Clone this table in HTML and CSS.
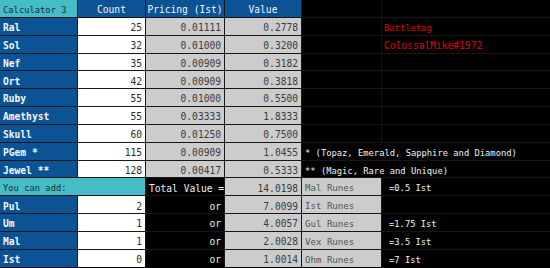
FILE: index.html
```html
<!DOCTYPE html>
<html>
<head>
<meta charset="utf-8">
<link rel="stylesheet" href="styles.css">
</head>
<body>
<div class="sheet">
  <div class="c cyan small">Calculator 3</div>
  <div class="c hdr">Count</div>
  <div class="c hdr">Pricing (Ist)</div>
  <div class="c hdr">Value</div>
  <div class="c blk"></div>
  <div class="c blk"></div>

  <div class="c lbl">Ral</div><div class="c wht">25</div><div class="c gry">0.01111</div><div class="c gry">0.2778</div><div class="c blk"></div><div class="c blk red small">Battletag</div>
  <div class="c lbl">Sol</div><div class="c wht">32</div><div class="c gry">0.01000</div><div class="c gry">0.3200</div><div class="c blk"></div><div class="c blk red">ColossalMike#1972</div>
  <div class="c lbl">Nef</div><div class="c wht">35</div><div class="c gry">0.00909</div><div class="c gry">0.3182</div><div class="c blk"></div><div class="c blk"></div>
  <div class="c lbl">Ort</div><div class="c wht">42</div><div class="c gry">0.00909</div><div class="c gry">0.3818</div><div class="c blk"></div><div class="c blk"></div>
  <div class="c lbl">Ruby</div><div class="c wht">55</div><div class="c gry">0.01000</div><div class="c gry">0.5500</div><div class="c blk"></div><div class="c blk"></div>
  <div class="c lbl">Amethyst</div><div class="c wht">55</div><div class="c gry">0.03333</div><div class="c gry">1.8333</div><div class="c blk"></div><div class="c blk"></div>
  <div class="c lbl">Skull</div><div class="c wht">60</div><div class="c gry">0.01250</div><div class="c gry">0.7500</div><div class="c blk"></div><div class="c blk"></div>
  <div class="c lbl">PGem *</div><div class="c wht">115</div><div class="c gry">0.00909</div><div class="c gry">1.0455</div><div class="c blk note small">* (Topaz, Emerald, Sapphire and Diamond)</div>
  <div class="c lbl">Jewel **</div><div class="c wht">128</div><div class="c gry">0.00417</div><div class="c gry">0.5333</div><div class="c blk note small">** (Magic, Rare and Unique)</div>

  <div class="c cyan small span2">You can add:</div><div class="c blk">Total Value =</div><div class="c gry">14.0198</div><div class="c gry rune">Mal Runes</div><div class="c blk small eq">=0.5 Ist</div>
  <div class="c lbl">Pul</div><div class="c wht">2</div><div class="c blk num">or</div><div class="c gry">7.0099</div><div class="c gry rune">Ist Runes</div><div class="c blk"></div>
  <div class="c lbl">Um</div><div class="c wht">1</div><div class="c blk num">or</div><div class="c gry">4.0057</div><div class="c gry rune">Gul Runes</div><div class="c blk small eq">=1.75 Ist</div>
  <div class="c lbl">Mal</div><div class="c wht">1</div><div class="c blk num">or</div><div class="c gry">2.0028</div><div class="c gry rune">Vex Runes</div><div class="c blk small eq">=3.5 Ist</div>
  <div class="c lbl">Ist</div><div class="c wht">0</div><div class="c blk num">or</div><div class="c gry">1.0014</div><div class="c gry rune">Ohm Runes</div><div class="c blk small eq">=7 Ist</div>
</div>
</body>
</html>
```
FILE: styles.css
```css
html, body {
  margin: 0;
  padding: 0;
  background: #000;
}
body {
  width: 550px;
  height: 268px;
  overflow: hidden;
  font-family: "DejaVu Sans Mono", "Liberation Mono", monospace;
}
.sheet {
  display: grid;
  grid-template-columns: 77px 67px 78px 76px 79px 1fr;
  grid-template-rows: repeat(15, 16.85px);
  gap: 1px;
  background: #161616;
  width: 550px;
}
.c {
  display: flex;
  align-items: flex-end;
  padding: 0 3px 2px 3px;
  font-size: 9.6px;
  line-height: 1;
  white-space: nowrap;
  overflow: hidden;
  min-width: 0;
}
.small { font-size: 8.8px; }
.cyan {
  background: #46bdc6;
  color: #16302f;
}
.span2 { grid-column: span 2; }
.hdr {
  background: #0b5394;
  color: #f2f6fa;
  justify-content: center;
}
.lbl {
  background: #0b5394;
  color: #f4f7fb;
  font-weight: bold;
}
.wht {
  background: #fff;
  color: #2a2a2a;
  justify-content: flex-end;
}
.gry {
  background: #cccccc;
  color: #3c3c3c;
  justify-content: flex-end;
}
.gry.rune {
  justify-content: flex-start;
  color: #555;
  font-size: 9.1px;
}
.blk {
  background: #000;
  color: #f2f2f2;
}
.eq { padding-left: 7px; }
.num { justify-content: flex-end; }
.note { grid-column: span 2; }
.red {
  color: #e00000;
  padding-left: 2px;
}
```
